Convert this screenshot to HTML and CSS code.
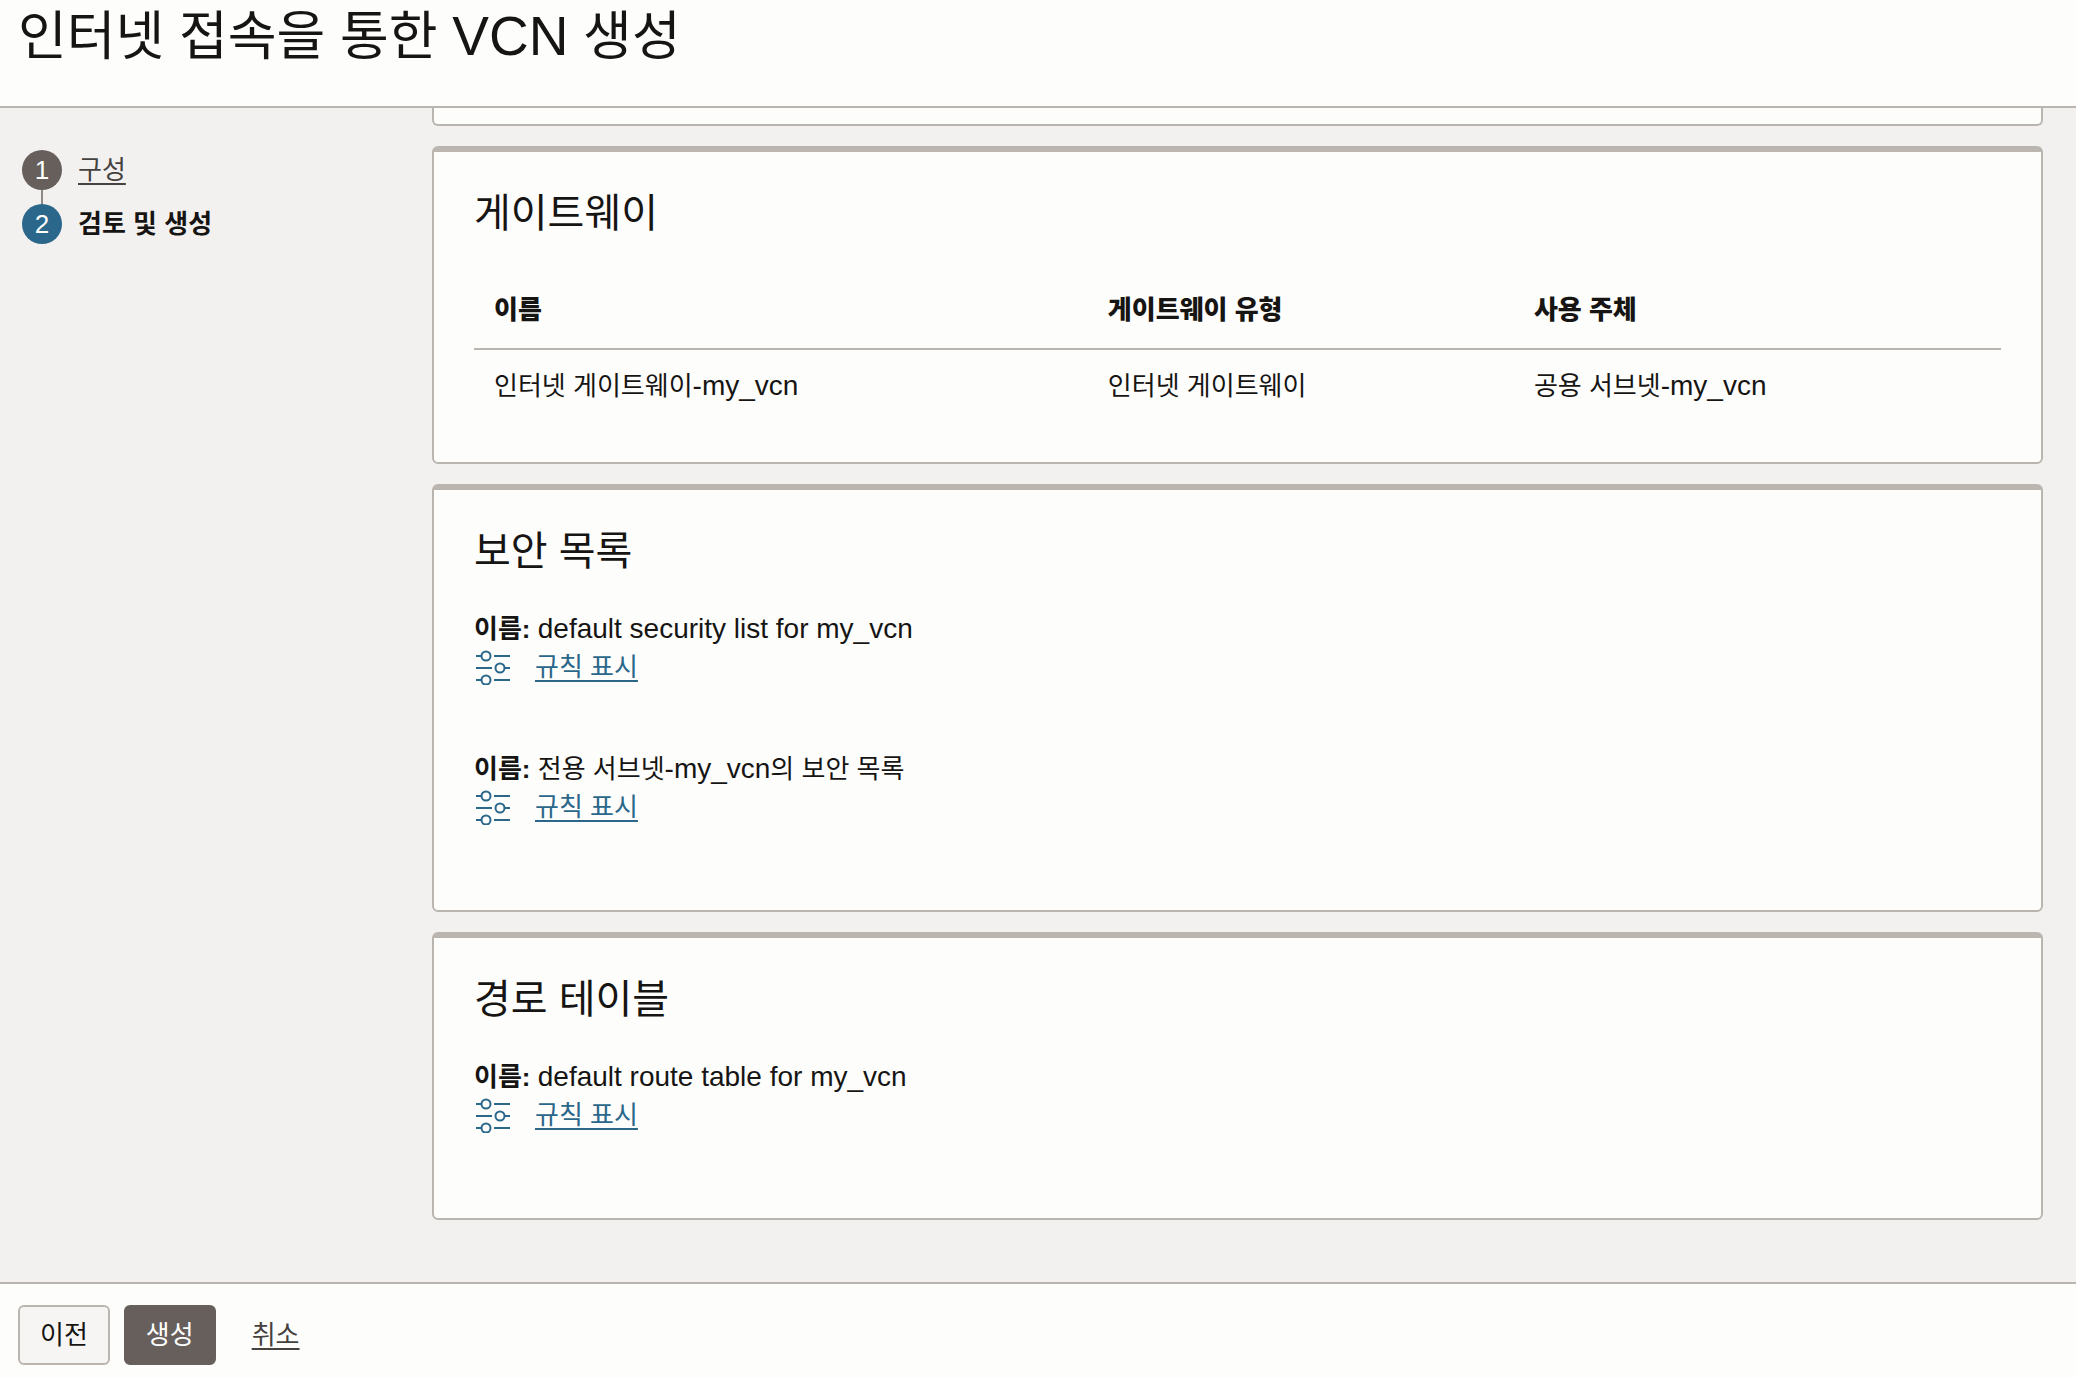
FILE: index.html
```html
<!DOCTYPE html>
<html lang="ko">
<head>
    <meta charset="UTF-8">
    <meta name="viewport" content="width=device-width, initial-scale=1.0">
    <title>인터넷 접속을 통한 VCN 생성</title>
    <link rel="stylesheet" href="styles.css">
</head>
<body>

<!-- icon used by the "show rules" links -->
<svg class="sprite" aria-hidden="true">
    <symbol id="rules" viewBox="0 0 36 36">
        <g fill="none" stroke="currentColor" stroke-width="2">
            <path d="M2 7h5M20 7h16M2 19h16M31 19h5M2 31h5M20 31h16"/>
            <circle cx="12" cy="7" r="4.5"/>
            <circle cx="26" cy="19" r="4.5"/>
            <circle cx="12" cy="31" r="4.5"/>
        </g>
    </symbol>
</svg>

<header class="header">
    <h1>인터넷 접속을 통한 <span class="latin">VCN</span> 생성</h1>
</header>

<div class="wizard">
    <nav class="sidebar">
        <ol class="steps">
            <li class="step"><span class="step-number">1</span><a href="#">구성</a></li>
            <li class="step current"><span class="step-number">2</span><span>검토 및 생성</span></li>
        </ol>
    </nav>

    <main class="content">
        <section class="card card-scrolled"></section>

        <section class="card">
            <h2>게이트웨이</h2>
            <table class="table">
                <thead>
                    <tr>
                        <th class="col-name">이름</th>
                        <th class="col-type">게이트웨이 유형</th>
                        <th>사용 주체</th>
                    </tr>
                </thead>
                <tbody>
                    <tr>
                        <td>인터넷 게이트웨이<span class="latin">-my_vcn</span></td>
                        <td>인터넷 게이트웨이</td>
                        <td>공용 서브넷<span class="latin">-my_vcn</span></td>
                    </tr>
                </tbody>
            </table>
        </section>

        <section class="card">
            <h2>보안 목록</h2>
            <div class="item">
                <p><strong>이름:</strong> <span class="latin">default security list for my_vcn</span></p>
                <p class="rules">
                    <svg class="icon" aria-hidden="true"><use href="#rules"/></svg>
                    <a href="#">규칙 표시</a>
                </p>
            </div>
            <div class="item">
                <p><strong>이름:</strong> 전용 서브넷<span class="latin">-my_vcn</span>의 보안 목록</p>
                <p class="rules">
                    <svg class="icon" aria-hidden="true"><use href="#rules"/></svg>
                    <a href="#">규칙 표시</a>
                </p>
            </div>
        </section>

        <section class="card">
            <h2>경로 테이블</h2>
            <div class="item">
                <p><strong>이름:</strong> <span class="latin">default route table for my_vcn</span></p>
                <p class="rules">
                    <svg class="icon" aria-hidden="true"><use href="#rules"/></svg>
                    <a href="#">규칙 표시</a>
                </p>
            </div>
        </section>
    </main>
</div>

<footer class="footer">
    <button type="button" class="button">이전</button>
    <button type="button" class="button primary">생성</button>
    <a href="#" class="cancel">취소</a>
</footer>

</body>
</html>
```
FILE: styles.css
```css
* {
    box-sizing: border-box;
}

body {
    margin: 0;
    height: 100vh;
    display: flex;
    flex-direction: column;
    overflow: hidden;
    background-color: #f3f1f0;
    color: #161513;
    font-family: "Liberation Sans", "Noto Sans CJK KR", sans-serif;
    font-size: 26px;
    line-height: 38px;
}

h1, h2, p {
    margin: 0;
    font-weight: normal;
}

/* latin letters run a bit larger than the hangul */
.latin {
    font-size: 28px;
    line-height: 1;
}

.sprite {
    display: none;
}

/* Header */
.header {
    flex: none;
    padding: 0 18px 32px;
    background-color: #fdfdfc;
    border-bottom: 2px solid #bbb5b0;
}

h1 {
    font-size: 53px;
    line-height: 74px;
}

h1 .latin {
    font-size: 55px;
}

.wizard {
    flex: 1;
    min-height: 0;
    display: flex;
}

/* Steps */
.sidebar {
    flex: none;
    width: 432px;
    padding: 42px 22px;
}

.steps {
    margin: 0;
    padding: 0;
    list-style: none;
}

.step {
    position: relative;
    display: flex;
    align-items: center;
    gap: 16px;
    margin-bottom: 14px;
}

.step a {
    color: #45413f;
}

.step-number {
    width: 40px;
    height: 40px;
    border-radius: 50%;
    background-color: #665f5b;
    color: #fff;
    line-height: 40px;
    text-align: center;
}

.current {
    font-weight: bold;
}

.current .step-number {
    background-color: #2a678a;
    font-weight: normal;
}

/* line between the two circles */
.current::before {
    content: "";
    position: absolute;
    left: 19px;
    top: -14px;
    width: 2px;
    height: 14px;
    background-color: #8f8985;
}

/* Cards */
.content {
    flex: 1;
    display: flex;
    flex-direction: column;
    gap: 20px;
    padding-right: 33px;
}

.card {
    padding: 40px 40px 20px;
    background-color: #fdfdfc;
    border: 2px solid #bbb5b0;
    border-top-width: 6px;
    border-radius: 6px;
}

/* only the bottom edge is left in view */
.card-scrolled {
    height: 18px;
    padding: 0;
    border-top: none;
    border-radius: 0 0 6px 6px;
}

h2 {
    margin-bottom: 38px;
    font-size: 40px;
    line-height: 42px;
}

.table {
    width: 100%;
    margin-bottom: 20px;
    border-collapse: separate;
    border-spacing: 0;
    table-layout: fixed;
    line-height: 32px;
    text-align: left;
}

.table th {
    padding: 22px 20px;
    border-bottom: 2px solid #bbb5b0;
    font-weight: 900;
}

.table td {
    padding: 20px;
}

.col-name {
    width: 40.2%;
}

.col-type {
    width: 27.9%;
}

.item {
    margin-bottom: 64px;
}

.rules {
    display: flex;
    align-items: center;
    gap: 25px;
    color: #2a678a;
}

.rules a {
    color: #2a678a;
}

.icon {
    width: 36px;
    height: 36px;
}

a {
    text-decoration-thickness: 2px;
    text-underline-offset: 4px;
}

/* Footer */
.footer {
    flex: none;
    display: flex;
    align-items: center;
    gap: 14px;
    height: 96px;
    padding: 8px 18px 0;
    background-color: #fdfdfc;
    border-top: 2px solid #bbb5b0;
}

.button {
    height: 60px;
    padding: 0 20px;
    border: 2px solid #bbb5b0;
    border-radius: 6px;
    background-color: #f7f5f4;
    color: #161513;
    font: inherit;
}

.primary {
    border-color: #665f5b;
    background-color: #665f5b;
    color: #fff;
}

.cancel {
    margin-left: 22px;
    color: #45413f;
}
```
